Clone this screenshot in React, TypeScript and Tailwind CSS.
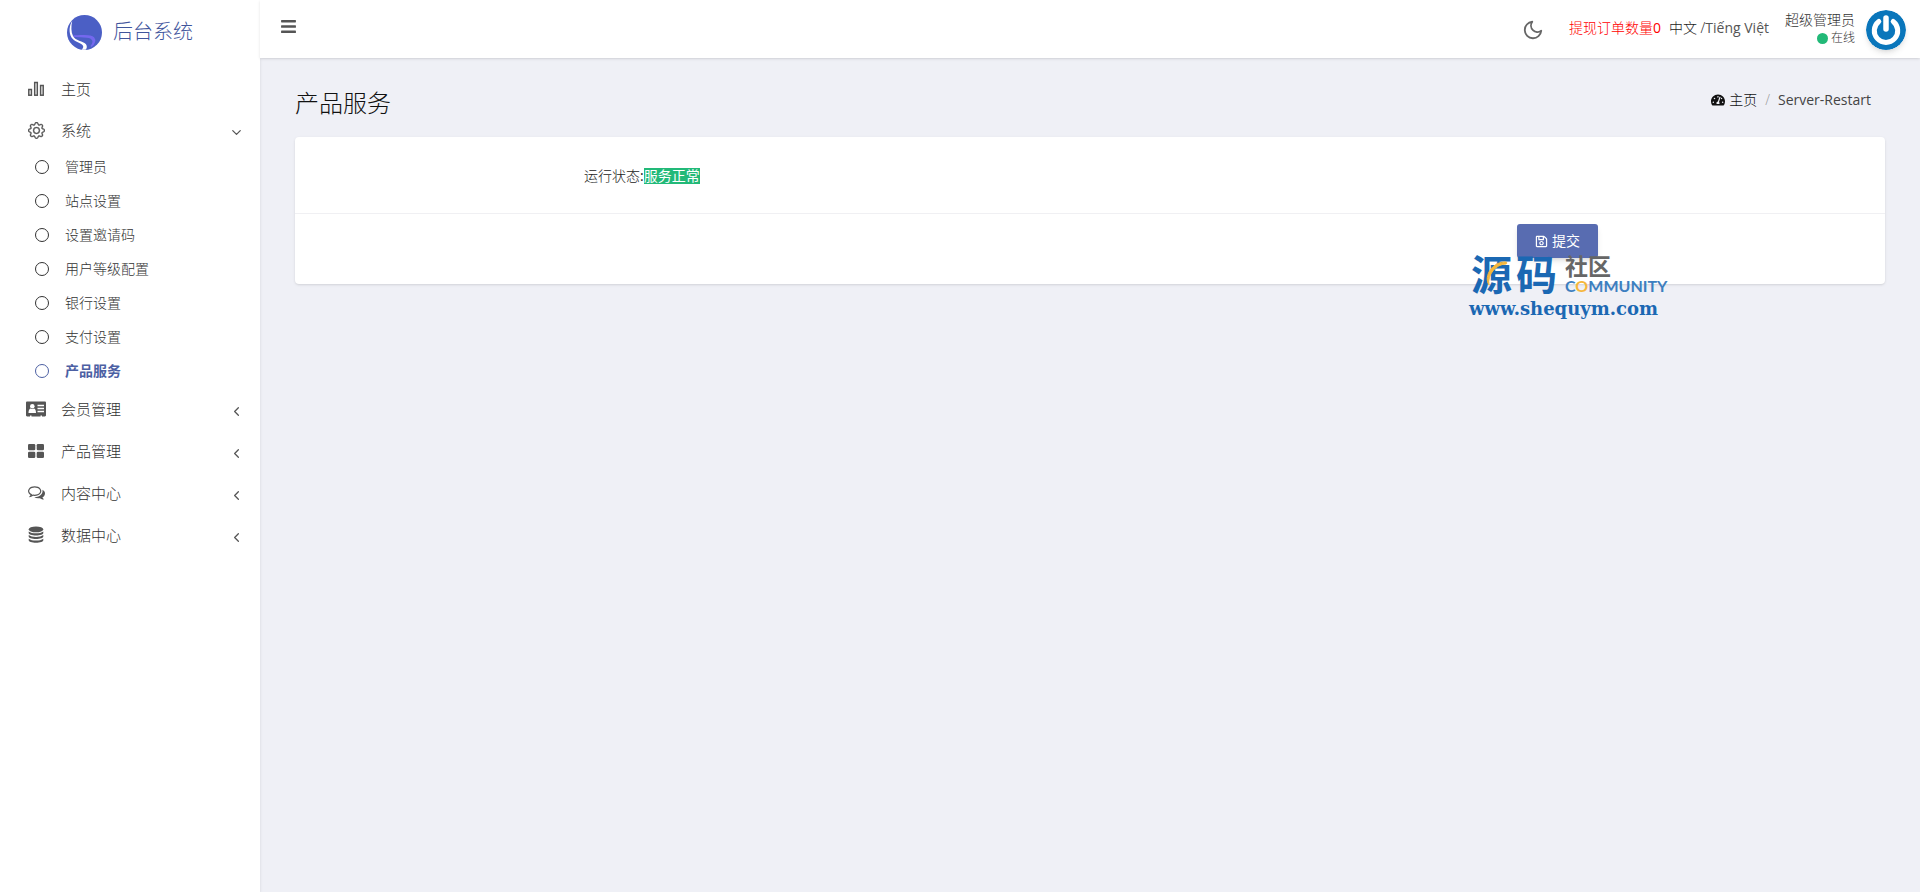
import React from "react";
import { FaBars, FaRegSave, FaTachometerAlt } from "react-icons/fa";
import { FiChevronDown, FiChevronLeft, FiMoon } from "react-icons/fi";
import { BsGear } from "react-icons/bs";

const ChartIcon = () => (
  <svg width="16" height="16" viewBox="0 0 16 16" fill="none" stroke="currentColor" strokeWidth="1.5">
    <rect x="0.8" y="8.5" width="2.600" height="5.700" />
    <rect x="6.700" y="1.500" width="2.600" height="12.700" />
    <rect x="12.600" y="4.500" width="2.600" height="9.700" />
  </svg>
);

const CardIcon = () => (
  <svg width="20" height="16" viewBox="0 0 20 16">
    <path
      d="M1.200 0.500h17.600c.7 0 1.200.5 1.200 1.200v12.600c0 .7-.5 1.200-1.200 1.200H16v-1h-1.500v1h-9v-1H4v1H1.200C.5 15.500 0 15 0 14.300V1.700C0 1 .5.500 1.200.5z"
      fill="currentColor"
    />
    <circle cx="6.300" cy="5.300" r="2.300" fill="#fff" />
    <path d="M2.500 12c0-3 1-4.500 2.300-4.500 1 .8 2 .8 3 0C9.100 7.500 10 9 10 12z" fill="#fff" />
    <path d="M11.500 4.500h6.500M11.500 7.500h6.500M11.500 10.500h6.500" stroke="#fff" strokeWidth="1.300" />
  </svg>
);

const GridIcon = () => (
  <svg width="16" height="14" viewBox="0 0 16 14" fill="currentColor">
    <rect width="7.300" height="6.300" rx="1.300" />
    <rect x="8.700" width="7.300" height="6.300" rx="1.300" />
    <rect y="7.700" width="7.300" height="6.300" rx="1.300" />
    <rect x="8.700" y="7.700" width="7.300" height="6.300" rx="1.300" />
  </svg>
);

const CommentsIcon = () => (
  <svg width="17" height="17" viewBox="0 128 1792 1792" fill="currentColor">
    <path d="M704 384q-153 0-286 52t-211.500 141-78.500 191q0 82 53 158t149 132l97 56-35 84q34-20 62-39l44-31 53 10q78 14 153 14 153 0 286-52t211.500-141 78.500-191-78.500-191-211.500-141-286-52zm0-128q191 0 353.500 68.500t256.500 186.500 94 257-94 257-256.500 186.500-353.500 68.500q-86 0-176-16-124 88-278 128-36 9-86 16h-3q-11 0-20.500-8t-11.500-21q-1-3-1-6.500t.5-6.500 2-6l2.500-5 3.500-5.500 4-5 4.500-5 4-4.500q5-6 23-25t26-29.500 22.500-29 25-38.500 20.500-44q-124-72-195-177t-71-224q0-139 94-257t256.500-186.500 353.500-68.500zm822 1169q10 24 20.500 44t25 38.500 22.500 29 26 29.500 23 25q1 1 4 4.500t4.500 5 4 5 3.500 5.500l2.500 5 2 6 .5 6.500-1 6.500q-3 14-13 22t-22 7q-50-7-86-16-154-40-278-128-90 16-176 16-271 0-472-132 58 4 88 4 161 0 309-45t264-129q125-92 192-212t67-254q0-77-23-152 129 71 204 178t75 230q0 120-71 224.500t-195 176.500z" />
  </svg>
);

const DatabaseIcon = () => (
  <svg width="16" height="18" viewBox="0 0 16 18" fill="currentColor">
    <ellipse cx="8" cy="3.400" rx="7.300" ry="2.900" />
    <path d="M.7 5.400c1.600 1.300 4.200 1.800 7.300 1.800s5.700-.5 7.300-1.800v1.500c0 1.400-3.300 2.500-7.300 2.500S.7 8.300.7 6.900z" />
    <path d="M.7 9.100c1.600 1.300 4.200 1.800 7.300 1.800s5.700-.5 7.300-1.800v1.500c0 1.400-3.300 2.500-7.300 2.500S.7 12 .7 10.600z" />
    <path d="M.7 12.800c1.600 1.300 4.200 1.800 7.300 1.800s5.700-.5 7.300-1.800v1.500c0 1.400-3.300 2.500-7.300 2.500s-7.300-1.100-7.300-2.500z" />
  </svg>
);

const Logo = () => (
  <svg width="35" height="35" viewBox="0 0 35 35">
    <circle cx="17.500" cy="17.500" r="17.500" fill="#4b5fc5" />
    <path d="M6.500 21c6 1 12.500-.5 17.500 2 3.500 2 2.500 5.500 0 8.500 3.500-2.500 4.500-6.500 2.500-8.800C22.500 19 12.500 21.500 6.500 21z" fill="#7468ee" stroke="#7468ee" strokeWidth="1.500" />
    <path
      d="M5.200 6C2.200 10.500 1.600 17.500 4.500 22.500c2.500 4 8 5 11 7.500 1.500 1.500.5 3.500-1 4.700 2 .3 3.500.2 4.500-.2 1.500-2.500 1-5-1.500-6.500-4-2.200-9-2.500-11.500-7C4 17 4 11 5.200 6z"
      fill="#fff"
    />
  </svg>
);

const Avatar = () => (
  <svg width="40" height="40" viewBox="0 0 40 40" className="rounded-full shadow-md">
    <circle cx="20" cy="20" r="20" fill="#0a76bb" />
    <path d="M12.800 11.500a11.700 11.700 0 1 0 14.400 0" fill="none" stroke="#fff" strokeWidth="5" strokeLinecap="round" />
    <path d="M20 8v11" stroke="#fff" strokeWidth="5.500" strokeLinecap="round" />
  </svg>
);

const subItems = ["管理员", "站点设置", "设置邀请码", "用户等级配置", "银行设置", "支付设置", "产品服务"];

const groups = [
  { name: "会员管理", icon: <CardIcon /> },
  { name: "产品管理", icon: <GridIcon /> },
  { name: "内容中心", icon: <CommentsIcon /> },
  { name: "数据中心", icon: <DatabaseIcon /> },
];

const Sidebar = () => {
  return (
    <aside className="w-[260px] shrink-0 bg-white shadow-sm">
      <a href="#" className="flex h-16 items-center justify-center gap-[11px] text-[#3f559c]">
        <Logo />
        <span className="text-xl font-light">后台系统</span>
      </a>
      <nav className="mt-1 text-[#333]">
        <a href="#" className="flex h-[42px] items-center pl-[26px] text-[15px]">
          <span className="mr-[15px] flex w-5 justify-center text-[#555]">
            <ChartIcon />
          </span>
          主页
        </a>
        <a href="#" className="flex h-10 items-center pl-[26px] pr-4 text-[15px]">
          <span className="mr-[15px] flex w-5 justify-center text-[#555]">
            <BsGear size={17} strokeWidth={0.3} />
          </span>
          系统
          <FiChevronDown size={15} className="ml-auto mt-1 text-[#555]" />
        </a>
        <ul>
          {subItems.map((item) => (
            <li key={item}>
              <a
                href="#"
                className={
                  item === "产品服务"
                    ? "flex h-[34px] items-center gap-4 pl-[35px] text-sm font-bold text-[#4c60a3]"
                    : "flex h-[34px] items-center gap-4 pl-[35px] text-sm"
                }
              >
                <span className="size-[14px] rounded-full border border-current" />
                {item}
              </a>
            </li>
          ))}
        </ul>
        {groups.map((group) => (
          <a key={group.name} href="#" className="flex h-[42px] items-center pl-[26px] pr-4 text-[15px]">
            <span className="mr-[15px] flex w-5 justify-center text-[#555]">{group.icon}</span>
            {group.name}
            <FiChevronLeft size={15} className="ml-auto mt-1 text-[#555]" />
          </a>
        ))}
      </nav>
    </aside>
  );
};

const Header = () => {
  return (
    <header className="flex h-[58px] items-center bg-white pl-5 pr-[14px] text-sm text-[#333] shadow-sm">
      <button aria-label="menu" className="mb-[6px] text-[#555]">
        <FaBars size={17} />
      </button>
      <button aria-label="dark mode" className="ml-auto mt-[2px] text-[#666]">
        <FiMoon size={22} />
      </button>
      <a href="#" className="mb-[2px] ml-[25px] text-[#ff0000]">
        提现订单数量<span className="font-normal">0</span>
      </a>
      <span className="mb-[2px] ml-2 text-[#222]">
        <a href="#">中文</a> /<a href="#" className="font-normal text-[#555]">Tiếng Việt</a>
      </span>
      <div className="mb-[2px] ml-4 text-right leading-5">
        <div>超级管理员</div>
        <div className="flex items-center justify-end gap-[3px] text-xs leading-4">
          <span className="size-[11px] rounded-full bg-[#22b978]" />
          在线
        </div>
      </div>
      <div className="ml-[11px] mt-[2px]">
        <Avatar />
      </div>
    </header>
  );
};

const Watermark = () => {
  return (
    <div className="absolute right-[220px] top-[114px] w-[196px] whitespace-nowrap">
      <div className="flex h-[46px] items-center gap-2">
        <div className="relative flex gap-1 pl-[2px] text-[41px] font-bold leading-[46px] text-[#1b68b3]">
          <span>源</span>
          <span>码</span>
          <svg width="24" height="28" viewBox="0 0 24 28" className="absolute left-4 top-2">
            <path d="M4 26C-2 17 8 2 21 3c1 0 1 2 0 2C11 5 2 16 4 26z" fill="#f6b73c" stroke="#f6b73c" />
          </svg>
        </div>
        <div>
          <div className="text-[23px] font-bold leading-6 text-[#666]">社区</div>
          <div className="font-['Lato'] text-base leading-4 font-bold text-[#3d7fc0]">
            C<span className="text-[#f6b73c]">O</span>MMUNITY
          </div>
        </div>
      </div>
      <div className="font-['DejaVu_Serif'] text-lg leading-6 font-bold text-[#1b68b3]">www.shequym.com</div>
    </div>
  );
};

const App = () => {
  return (
    <div className="flex min-h-screen bg-[#eff0f6] font-['Open_Sans','Noto_Sans_CJK_SC',sans-serif] font-light">
      <Sidebar />
      <div className="min-w-0 flex-1">
        <Header />
        <main className="px-[35px] pt-[26px]">
          <div className="mb-[15px] flex h-[38px] items-center justify-between">
            <h1 className="text-2xl text-[#111]">产品服务</h1>
            <div className="mb-[6px] mr-[14px] flex items-center text-sm text-[#111]">
              <FaTachometerAlt size={14} />
              <a href="#" className="ml-1">主页</a>
              <span className="mx-2 text-[#999]">/</span>
              <span className="font-normal text-[#444]">Server-Restart</span>
            </div>
          </div>
          <form className="relative rounded bg-white text-sm shadow-sm" onSubmit={(e) => e.preventDefault()}>
            <div className="grid h-[77px] grid-cols-12 items-center border-b border-[#f0f0f3]">
              <div className="col-span-8 col-start-3 px-6 pt-[2px] text-[#222]">
                运行状态<span className="font-normal">:</span>
                <span className="inline-block bg-[#22b978] leading-4 font-normal text-white">服务正常</span>
              </div>
            </div>
            <div className="grid h-[70px] grid-cols-12">
              <div className="col-span-8 col-start-3 px-[22px] pt-[10px] text-right">
                <button className="inline-flex h-[34px] w-[81px] items-center justify-center gap-1 rounded-[3px] bg-[#586cb1] font-normal text-white shadow-md">
                  <FaRegSave size={13} />
                  提交
                </button>
              </div>
            </div>
            <Watermark />
          </form>
        </main>
      </div>
    </div>
  );
};

export default App;
